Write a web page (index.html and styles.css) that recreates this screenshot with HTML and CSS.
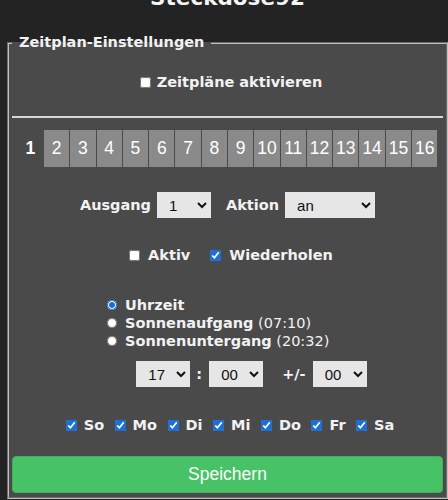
FILE: index.html
```html
<!DOCTYPE html>
<html lang="de">
<head>
<meta charset="utf-8">
<title>Steckdose92</title>
<link rel="stylesheet" href="styles.css">
</head>
<body>
<div class="page">
  <h1 class="title">Steckdose92</h1>
  <fieldset class="panel">
    <legend class="legend">Zeitplan-Einstellungen</legend>

    <div class="row master">
      <label class="check gap-6"><input type="checkbox"><span>Zeitpläne aktivieren</span></label>
    </div>

    <hr class="rule">

    <div class="tabs">
      <div class="tab active">1</div>
      <div class="tab">2</div>
      <div class="tab">3</div>
      <div class="tab">4</div>
      <div class="tab">5</div>
      <div class="tab">6</div>
      <div class="tab">7</div>
      <div class="tab">8</div>
      <div class="tab">9</div>
      <div class="tab">10</div>
      <div class="tab">11</div>
      <div class="tab">12</div>
      <div class="tab">13</div>
      <div class="tab">14</div>
      <div class="tab">15</div>
      <div class="tab">16</div>
    </div>

    <div class="row output">
      <span class="lbl">Ausgang</span>
      <select class="sel sel-sm"><option>1</option></select>
      <span class="lbl lbl-gap">Aktion</span>
      <select class="sel sel-lg"><option>an</option></select>
    </div>

    <div class="row flags">
      <label class="check gap-8"><input type="checkbox"><span>Aktiv</span></label>
      <label class="check gap-8"><input type="checkbox" checked><span>Wiederholen</span></label>
    </div>

    <div class="choices">
      <label class="choice"><input type="radio" name="mode" checked><b>Uhrzeit</b></label>
      <label class="choice"><input type="radio" name="mode"><b>Sonnenaufgang</b>&nbsp;<span class="sun">(07:10)</span></label>
      <label class="choice"><input type="radio" name="mode"><b>Sonnenuntergang</b>&nbsp;<span class="sun">(20:32)</span></label>
    </div>

    <div class="row time">
      <select class="sel sel-sm"><option>17</option></select>
      <span class="lbl colon">:</span>
      <select class="sel sel-sm"><option>00</option></select>
      <span class="lbl offset">+/-</span>
      <select class="sel sel-sm"><option>00</option></select>
    </div>

    <div class="row days">
      <label class="check gap-7"><input type="checkbox" checked><span>So</span></label>
      <label class="check gap-7"><input type="checkbox" checked><span>Mo</span></label>
      <label class="check gap-7"><input type="checkbox" checked><span>Di</span></label>
      <label class="check gap-7"><input type="checkbox" checked><span>Mi</span></label>
      <label class="check gap-7"><input type="checkbox" checked><span>Do</span></label>
      <label class="check gap-7"><input type="checkbox" checked><span>Fr</span></label>
      <label class="check gap-7"><input type="checkbox" checked><span>Sa</span></label>
    </div>

    <button class="save" type="button">Speichern</button>
  </fieldset>
</div>
</body>
</html>
```

FILE: styles.css
```css
html, body {
  margin: 0;
  padding: 0;
}

body {
  width: 448px;
  height: 500px;
  overflow: hidden;
  background: #232323;
  color: #f2f2f2;
  font-family: "DejaVu Sans", Verdana, sans-serif;
}

.page {
  margin-left: 7px;
  width: 441px;
}

.title {
  margin: -14.5px 0 0;
  font-size: 21.5px;
  line-height: 24px;
  font-weight: bold;
  text-align: center;
  color: #f5f5f5;
}

.panel {
  box-sizing: border-box;
  width: 441px;
  min-width: 0;
  margin: 24.5px 0 0;
  padding: 0 3px 4px;
  border: 2px groove #c0c0c0;
  background: #4a4a4a;
}

.legend {
  padding: 0 7px;
  font-size: 14.5px;
  line-height: 17px;
  font-weight: bold;
  color: #f2f2f2;
}

.row {
  display: flex;
  align-items: center;
  justify-content: center;
}

.check {
  display: flex;
  align-items: center;
  font-size: 14.5px;
  font-weight: bold;
  line-height: 17px;
}

.check input {
  width: 11px;
  height: 11px;
  margin: 0;
  accent-color: #1b6fd8;
}

.gap-6 { gap: 6px; }
.gap-7 { gap: 7px; }
.gap-8 { gap: 8px; }

.master {
  height: 20px;
  margin-top: 21px;
  padding-left: 7px;
}

.rule {
  height: 0;
  margin: 24px 0 0;
  border: 0;
  border-top: 2px solid #d6d6d6;
}

.tabs {
  display: flex;
  justify-content: center;
  gap: 1px;
  margin-top: 12px;
}

.tab {
  width: 25.3px;
  height: 37px;
  display: flex;
  align-items: center;
  justify-content: center;
  background: #8a8a8a;
  color: #ffffff;
  font-family: "Liberation Sans", Arial, sans-serif;
  font-size: 17.5px;
}

.tab.active {
  background: transparent;
  font-weight: bold;
}

.lbl {
  font-size: 14.5px;
  font-weight: bold;
  line-height: 17px;
}

.sel {
  box-sizing: border-box;
  height: 26px;
  margin: 0;
  padding: 0 0 0 7px;
  border: 1px solid #e6e6e6;
  border-radius: 0;
  background-color: #e6e6e6;
  color: #111;
  font-family: "Liberation Sans", Arial, sans-serif;
  font-size: 15px;
}

.sel-sm { width: 54px; }
.sel-lg { width: 90px; }

.output {
  height: 26px;
  margin-top: 25px;
  gap: 6px;
}

.output .lbl-gap {
  margin-left: 9px;
}

.flags {
  height: 20px;
  margin-top: 27px;
  gap: 20px;
  padding-left: 7px;
}

.choices {
  display: flex;
  flex-direction: column;
  margin: 31px 0 0 95px;
}

.choice {
  display: flex;
  align-items: center;
  height: 18px;
  font-size: 14.5px;
  line-height: 17px;
}

.choice input {
  width: 10px;
  height: 10px;
  margin: 0 8px 0 0;
  accent-color: #1b6fd8;
}

.choice b {
  font-weight: bold;
}

.choice .sun {
  font-weight: normal;
}

.time {
  height: 26px;
  margin-top: 11px;
  padding-left: 48px;
}

.colon {
  margin: 0 7px 0 6px;
}

.offset {
  margin: 0 7px 0 19px;
}

.days {
  height: 20px;
  margin-top: 28px;
  gap: 10.5px;
  padding-left: 5px;
}

.save {
  display: block;
  box-sizing: border-box;
  width: 100%;
  height: 37px;
  margin-top: 21px;
  padding: 0;
  border: 1px solid #41b05e;
  border-radius: 4px;
  background: #48c266;
  color: #ffffff;
  font-family: "Liberation Sans", Arial, sans-serif;
  font-size: 17.5px;
}
```
